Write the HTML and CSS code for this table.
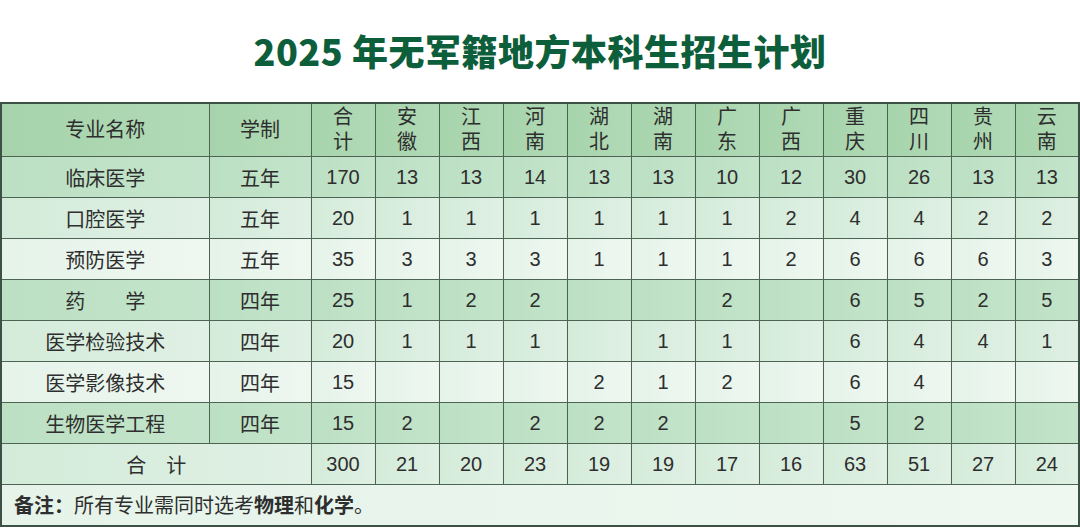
FILE: index.html
```html
<!DOCTYPE html>
<html lang="zh-CN">
<head>
<meta charset="utf-8">
<title>2025年无军籍地方本科生招生计划</title>
<link rel="stylesheet" href="styles.css">
</head>
<body>
<div class="page">
  <h1 class="title">2025 年无军籍地方本科生招生计划</h1>
  <table class="plan">
    <colgroup>
      <col class="c-name"><col class="c-len"><col class="c-sum">
      <col class="c-p"><col class="c-p"><col class="c-p"><col class="c-p"><col class="c-p"><col class="c-p">
      <col class="c-p"><col class="c-p"><col class="c-p"><col class="c-p"><col class="c-p">
    </colgroup>
    <thead>
      <tr class="head">
        <th>专业名称</th><th>学制</th><th>合<br>计</th>
        <th>安<br>徽</th><th>江<br>西</th><th>河<br>南</th><th>湖<br>北</th><th>湖<br>南</th>
        <th>广<br>东</th><th>广<br>西</th><th>重<br>庆</th><th>四<br>川</th><th>贵<br>州</th><th>云<br>南</th>
      </tr>
    </thead>
    <tbody>
      <tr class="t1"><td>临床医学</td><td>五年</td><td>170</td><td>13</td><td>13</td><td>14</td><td>13</td><td>13</td><td>10</td><td>12</td><td>30</td><td>26</td><td>13</td><td>13</td></tr>
      <tr class="t2"><td>口腔医学</td><td>五年</td><td>20</td><td>1</td><td>1</td><td>1</td><td>1</td><td>1</td><td>1</td><td>2</td><td>4</td><td>4</td><td>2</td><td>2</td></tr>
      <tr class="t3"><td>预防医学</td><td>五年</td><td>35</td><td>3</td><td>3</td><td>3</td><td>1</td><td>1</td><td>1</td><td>2</td><td>6</td><td>6</td><td>6</td><td>3</td></tr>
      <tr class="t1"><td>药　　学</td><td>四年</td><td>25</td><td>1</td><td>2</td><td>2</td><td></td><td></td><td>2</td><td></td><td>6</td><td>5</td><td>2</td><td>5</td></tr>
      <tr class="t2"><td>医学检验技术</td><td>四年</td><td>20</td><td>1</td><td>1</td><td>1</td><td></td><td>1</td><td>1</td><td></td><td>6</td><td>4</td><td>4</td><td>1</td></tr>
      <tr class="t3"><td>医学影像技术</td><td>四年</td><td>15</td><td></td><td></td><td></td><td>2</td><td>1</td><td>2</td><td></td><td>6</td><td>4</td><td></td><td></td></tr>
      <tr class="t1"><td>生物医学工程</td><td>四年</td><td>15</td><td>2</td><td></td><td>2</td><td>2</td><td>2</td><td></td><td></td><td>5</td><td>2</td><td></td><td></td></tr>
      <tr class="t2 total"><td colspan="2">合　计</td><td>300</td><td>21</td><td>20</td><td>23</td><td>19</td><td>19</td><td>17</td><td>16</td><td>63</td><td>51</td><td>27</td><td>24</td></tr>
      <tr class="t3 note"><td colspan="14"><b>备注：</b>所有专业需同时选考<b>物理</b>和<b>化学</b>。</td></tr>
    </tbody>
  </table>
</div>
</body>
</html>
```
FILE: styles.css
```css
html, body {
  margin: 0;
  padding: 0;
  background: #ffffff;
}
.page {
  width: 1080px;
  font-family: "Liberation Sans", "Noto Sans CJK SC", sans-serif;
  color: #2e2e2e;
}
.title {
  margin: 0;
  height: 102px;
  display: flex;
  align-items: center;
  justify-content: center;
  padding-bottom: 2px;
  box-sizing: border-box;
  font-family: "Noto Sans CJK SC", sans-serif;
  font-weight: 900;
  font-size: 36px;
  letter-spacing: 0.5px;
  color: #0d5e3b;
}
.plan {
  width: 1079px;
  border-collapse: collapse;
  table-layout: fixed;
  border: 2px solid #3c5046;
  font-size: 20px;
}
.c-name { width: 208px; }
.c-len { width: 102px; }
.c-sum { width: 64px; }
.c-p { width: 64px; }
.plan th, .plan td {
  border: 1px solid #4d6455;
  text-align: center;
  vertical-align: middle;
  padding: 0;
  font-weight: normal;
}
.head th {
  height: 52px;
  line-height: 25px;
  background: linear-gradient(90deg, #a6d3ac, #b0dab5);
}
.plan tbody tr { height: 41px; }
.t1 td { background: linear-gradient(90deg, #bce0c3, #c3e4ca); }
.t2 td { background: linear-gradient(90deg, #d3ebd9, #e0f0e4); }
.t3 td { background: linear-gradient(90deg, #e5f3e9, #eef7f0); }
.plan .note td {
  height: 39px;
  text-align: left;
  padding-left: 12px;
}
.note b { font-weight: bold; }
```
